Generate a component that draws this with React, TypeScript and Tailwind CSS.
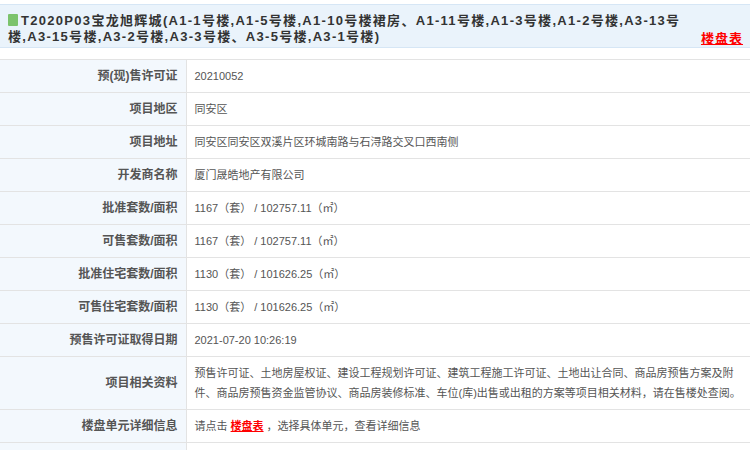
import React from "react";

const rows: [string, React.ReactNode][] = [
  ["预(现)售许可证", "20210052"],
  ["项目地区", "同安区"],
  ["项目地址", "同安区同安区双溪片区环城南路与石浔路交叉口西南侧"],
  ["开发商名称", "厦门晟皓地产有限公司"],
  ["批准套数/面积", "1167（套） / 102757.11（㎡）"],
  ["可售套数/面积", "1167（套） / 102757.11（㎡）"],
  ["批准住宅套数/面积", "1130（套） / 101626.25（㎡）"],
  ["可售住宅套数/面积", "1130（套） / 101626.25（㎡）"],
  ["预售许可证取得日期", "2021-07-20 10:26:19"],
  [
    "项目相关资料",
    "预售许可证、土地房屋权证、建设工程规划许可证、建筑工程施工许可证、土地出让合同、商品房预售方案及附件、商品房预售资金监管协议、商品房装修标准、车位(库)出售或出租的方案等项目相关材料，请在售楼处查阅。",
  ],
  [
    "楼盘单元详细信息",
    <span>
      请点击 <a className="text-[#ff0000] font-bold underline">楼盘表</a> ，选择具体单元，查看详细信息
    </span>,
  ],
];

export default function App() {
  return (
    <div className="w-[750px] h-[450px] overflow-hidden bg-white pt-[4px] text-[12px] text-[#333]" style={{ fontFamily: '"Liberation Sans","Noto Sans CJK SC",sans-serif' }}>
      <div className="bg-[#eaf3fb] border-y border-[#d6e6f5] pl-[8px] pr-[28px] pt-[8px] pb-[4px] h-[44px] relative">
        <div className="font-bold text-[13px] leading-[16px] tracking-[1.3px] text-[#333]">
          <span className="inline-block w-[10px] h-[12px] bg-[#7cc36c] mr-[3px] align-[-1px] rounded-[1px]" />
          T2020P03宝龙旭辉城(A1-1号楼,A1-5号楼,A1-10号楼裙房、A1-11号楼,A1-3号楼,A1-2号楼,A3-13号楼,A3-15号楼,A3-2号楼,A3-3号楼、A3-5号楼,A3-1号楼)
        </div>
        <a className="absolute right-[7px] top-[24px] text-[#ff0000] font-bold underline text-[13px] tracking-[1px]">楼盘表</a>
      </div>
      <table className="mt-[11px] w-full border-collapse">
        <tbody>
          {rows.map(([k, v], i) => (
            <tr key={i} className="border-y border-[#e3e3e3]">
              <td className="w-[186px] bg-[#f3f8fd] text-right font-bold text-[#555] pr-[8px] h-[32px] border-r border-[#e3e3e3]">{k}</td>
              <td className="pl-[8px] pr-[6px] py-[6px] leading-[20px] text-[11px] text-[#555]">{v}</td>
            </tr>
          ))}
          <tr className="border-y border-[#e3e3e3]">
            <td className="bg-[#f3f8fd] h-[32px] border-r border-[#e3e3e3]"></td>
            <td></td>
          </tr>
        </tbody>
      </table>
    </div>
  );
}
